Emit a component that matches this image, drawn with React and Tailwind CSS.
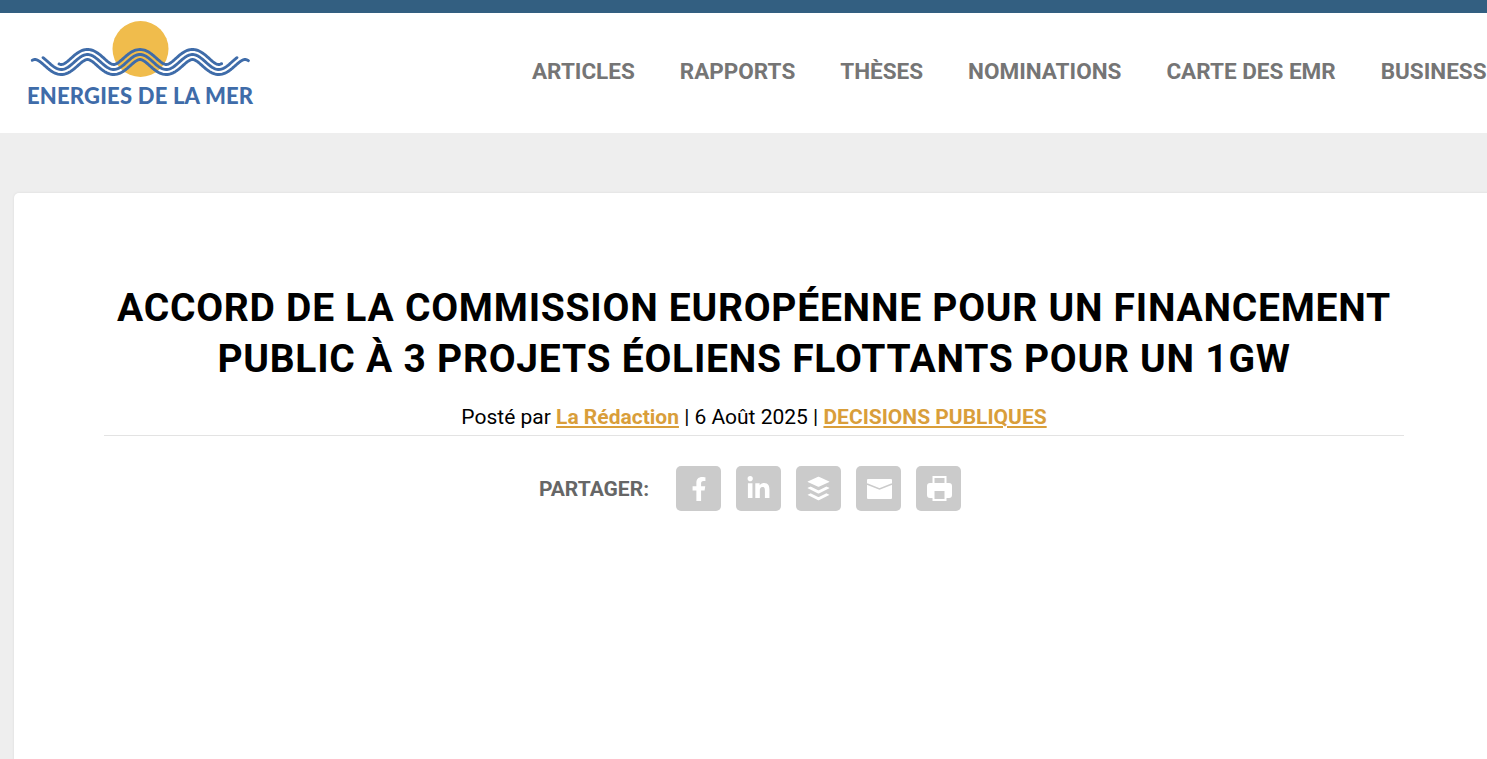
import { FaFacebookF, FaLinkedinIn, FaBuffer } from 'react-icons/fa'

const NAV = ['ARTICLES', 'RAPPORTS', 'THÈSES', 'NOMINATIONS', 'CARTE DES EMR', 'BUSINESS']

// three parallel lines offset from one sine wave, each with its own start and end
function wavePath(offset, from, to) {
  const k = (2 * Math.PI) / 52.5
  const pts = []
  for (let x = from; x <= to; x += 1) {
    const slope = 7.5 * k * Math.sin(k * (x - 140))
    const len = Math.hypot(1, slope)
    const px = x - (offset * slope) / len
    const py = 62 - 7.5 * Math.cos(k * (x - 140)) + offset / len
    pts.push(`${px.toFixed(2)} ${py.toFixed(2)}`)
  }
  return 'M' + pts.join(' L')
}

const WAVES = [wavePath(-5, 57, 224), wavePath(0, 43, 237), wavePath(5, 30, 251)]

function MailIcon() {
  return (
    <svg viewBox="0 0 45 45" className="w-[45px] h-[45px]">
      <rect x="11" y="13" width="25" height="20" rx="1" fill="#fff" />
      <path d="M11 18 L23.500 23 L36 18" fill="none" stroke="#cbcbcb" strokeWidth="1.500" />
    </svg>
  )
}

function PrintIcon() {
  return (
    <svg viewBox="0 0 45 45" className="w-[45px] h-[45px]">
      <path fill="#fff" fillRule="evenodd" d="M16.500 10 H30.500 V17 H33 A3 3 0 0 1 36 20 V29 A3 3 0 0 1 33 32 H30.500 V35 H16.500 V32 H14 A3 3 0 0 1 11 29 V20 A3 3 0 0 1 14 17 H16.500 Z M18.500 12 V17 H28.500 V12 Z M18.500 25 V33 H28.500 V25 Z" />
    </svg>
  )
}

const SHARE = [
  { id: 'facebook', icon: <FaFacebookF size={24} /> },
  { id: 'linkedin', icon: <FaLinkedinIn size={25} /> },
  { id: 'buffer', icon: <FaBuffer size={27} /> },
  { id: 'mail', icon: <MailIcon /> },
  { id: 'print', icon: <PrintIcon /> },
]

function Logo() {
  return (
    <div className="shrink-0 w-[226px]">
      <svg viewBox="28 21 226 57" className="block w-[226px] h-[57px]">
        <circle cx="140.500" cy="49" r="28" fill="#f0bc4c" />
        {WAVES.map((d, i) => (
          <path key={i} d={d} fill="none" stroke="#3f6ca9" strokeWidth="2.900" strokeLinecap="round" strokeLinejoin="round" />
        ))}
      </svg>
      <div className="font-['Lato',sans-serif] font-black text-[22px] leading-[22px] mt-[7px] -ml-[1px] tracking-[0.2px] whitespace-nowrap text-[#3f6ca9]">
        ENERGIES DE LA MER
      </div>
    </div>
  )
}

export default function App() {
  return (
    <div className="h-[759px] overflow-hidden bg-[#eeeeee] font-['Roboto',sans-serif]">
      <div className="h-[13px] bg-[#335f81]" />

      {/* Header */}
      <header className="h-[120px] bg-white flex items-start pl-[28px] pt-[8px] overflow-hidden">
        <Logo />
        <nav className="ml-[278px] mt-[33px] flex gap-[45px] whitespace-nowrap">
          {NAV.map(item => (
            <a key={item} className="text-[22.500px] leading-[34px] font-bold text-[#757575] shrink-0">{item}</a>
          ))}
        </nav>
      </header>

      {/* Article */}
      <main className="mt-[60px] ml-[14px] w-[1480px] h-[600px] bg-white rounded-[5px] shadow-[0_0_3px_rgba(0,0,0,0.08)] px-[90px] pt-[90px]">
        <h1 className="text-[39px] leading-[51px] font-bold text-black text-center tracking-[0.75px]">
          ACCORD DE LA COMMISSION EUROPÉENNE POUR UN FINANCEMENT<br />
          PUBLIC À 3 PROJETS ÉOLIENS FLOTTANTS POUR UN 1GW
        </h1>
        <p className="mt-[17px] text-[21px] leading-[30px] text-black text-center border-b border-[#e3e3e3] pb-[3px]">
          Posté par <a className="font-bold text-[#d99e3a] underline">La Rédaction</a> | 6 Août 2025 | <a className="font-bold text-[#d99e3a] underline">DECISIONS PUBLIQUES</a>
        </p>
        <div className="mt-[30px] flex items-center justify-center gap-[15px] pr-[8px]">
          <span className="text-[21px] font-bold text-[#666666] mr-[12px] pt-[2px]">PARTAGER:</span>
          {SHARE.map(s => (
            <a key={s.id} className="w-[45px] h-[45px] rounded-[5px] bg-[#cbcbcb] text-white flex items-center justify-center">
              {s.icon}
            </a>
          ))}
        </div>
      </main>
    </div>
  )
}
